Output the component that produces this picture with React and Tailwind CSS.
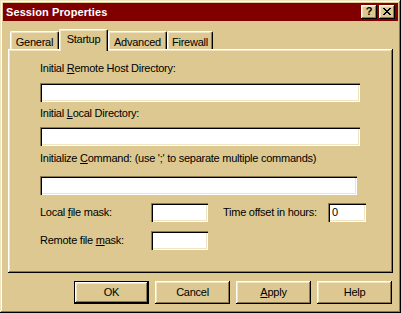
import React from 'react';

const raised =
  'shadow-[inset_-1px_-1px_0_#000,inset_1px_1px_0_#fff,inset_-2px_-2px_0_#8a7a4e,inset_2px_2px_0_#efe4c4]';
const sunken =
  'shadow-[inset_1px_1px_0_#8a7a4e,inset_2px_2px_0_#000,inset_-1px_-1px_0_#fff,inset_-2px_-2px_0_#efe4c4]';

function U({ children }) {
  return <span className="underline decoration-1 underline-offset-[1px]">{children}</span>;
}

function Field({ w, value }) {
  return (
    <div className={`h-[19px] bg-white ${sunken} ${w} pl-[4px] flex items-center`}>
      {value}
    </div>
  );
}

function Tab({ label, w, active }) {
  if (active) {
    return (
      <div
        className={`relative z-10 -mb-[2px] h-[22px] ${w} bg-[#dcc890] border-t border-l border-white border-r border-r-black rounded-t-[2px] shadow-[inset_-1px_0_0_#8a7a4e,inset_1px_1px_0_#efe4c4] flex justify-center pt-[3px]`}
      >
        {label}
      </div>
    );
  }
  return (
    <div
      className={`h-[18px] ${w} border-t border-l border-white border-r border-r-black rounded-t-[2px] shadow-[inset_-1px_0_0_#8a7a4e,inset_1px_1px_0_#efe4c4] flex justify-center pt-[4px]`}
    >
      {label}
    </div>
  );
}

function Button({ children, isDefault }) {
  if (isDefault) {
    return (
      <div className="w-[75px] h-[23px] border border-black">
        <div className={`w-full h-full ${raised} flex items-center justify-center`}>{children}</div>
      </div>
    );
  }
  return (
    <div className={`w-[75px] h-[23px] ${raised} flex items-center justify-center`}>{children}</div>
  );
}

export default function App() {
  return (
    <div
      className={`w-[401px] h-[313px] bg-[#dcc890] p-[3px] flex flex-col text-black text-[11px] leading-[13px] tracking-[-0.25px] font-['Liberation_Sans',Arial,sans-serif] shadow-[inset_-1px_-1px_0_#000,inset_1px_1px_0_#efe4c4,inset_-2px_-2px_0_#8a7a4e,inset_2px_2px_0_#fff]`}
    >
      {/* Title bar */}
      <div className="h-[18px] bg-[#800000] flex items-center justify-between pl-[3px] pr-[3px]">
        <span className="font-bold text-white tracking-[0.1px]">Session Properties</span>
        <div className="flex gap-[2px]">
          <div className={`w-[16px] h-[14px] bg-[#dcc890] text-black ${raised} flex items-center justify-center font-bold text-[11px] leading-none pb-[1px]`}>
            ?
          </div>
          <div className={`w-[16px] h-[14px] bg-[#dcc890] ${raised} flex items-center justify-center pb-[1px]`}>
            <svg width="8" height="7" viewBox="0 0 8 7" shapeRendering="crispEdges">
              <path d="M0 0h2v1H0zM6 0h2v1H6zM1 1h2v1H1zM5 1h2v1H5zM2 2h4v1H2zM3 3h2v1H3zM2 4h4v1H2zM1 5h2v1H1zM5 5h2v1H5zM0 6h2v1H0zM6 6h2v1H6z" fill="#000" />
            </svg>
          </div>
        </div>
      </div>

      <div className="flex flex-col px-[5px]">
        {/* Tabs */}
        <div className="mt-[8px] h-[20px] flex items-end pl-[2px]">
          <Tab label="General" w="w-[49px]" />
          <Tab label="Startup" w="w-[49px]" active />
          <Tab label="Advanced" w="w-[59px]" />
          <Tab label="Firewall" w="w-[46px]" />
        </div>

        {/* Panel */}
        <div className="h-[224px] shadow-[inset_-1px_-1px_0_#000,inset_1px_1px_0_#fff,inset_-2px_-2px_0_#8a7a4e,inset_2px_2px_0_#efe4c4] pt-[13px] pl-[32px] flex flex-col">
          <div>
            Initial <U>R</U>emote Host Directory:
          </div>
          <div className="mt-[8px]">
            <Field w="w-[320px]" />
          </div>
          <div className="mt-[5px]">
            Initial <U>L</U>ocal Directory:
          </div>
          <div className="mt-[7px]">
            <Field w="w-[320px]" />
          </div>
          <div className="mt-[6px]">
            Initialize <U>C</U>ommand: (use ';' to separate multiple commands)
          </div>
          <div className="mt-[11px]">
            <Field w="w-[317px]" />
          </div>
          <div className="mt-[8px] flex items-center">
            <div className="w-[111px]">
              Local <U>f</U>ile mask:
            </div>
            <Field w="w-[57px]" />
            <div className="ml-[15px] w-[105px]">Time offset in hours:</div>
            <Field w="w-[38px]" value="0" />
          </div>
          <div className="mt-[9px] flex items-center">
            <div className="w-[111px]">
              Remote file <U>m</U>ask:
            </div>
            <Field w="w-[57px]" />
          </div>
        </div>

        {/* Buttons */}
        <div className="mt-[8px] flex justify-end gap-[6px] pr-[1px]">
          <Button isDefault>OK</Button>
          <Button>Cancel</Button>
          <Button>
            <span>
              <U>A</U>pply
            </span>
          </Button>
          <Button>Help</Button>
        </div>
      </div>
    </div>
  );
}
